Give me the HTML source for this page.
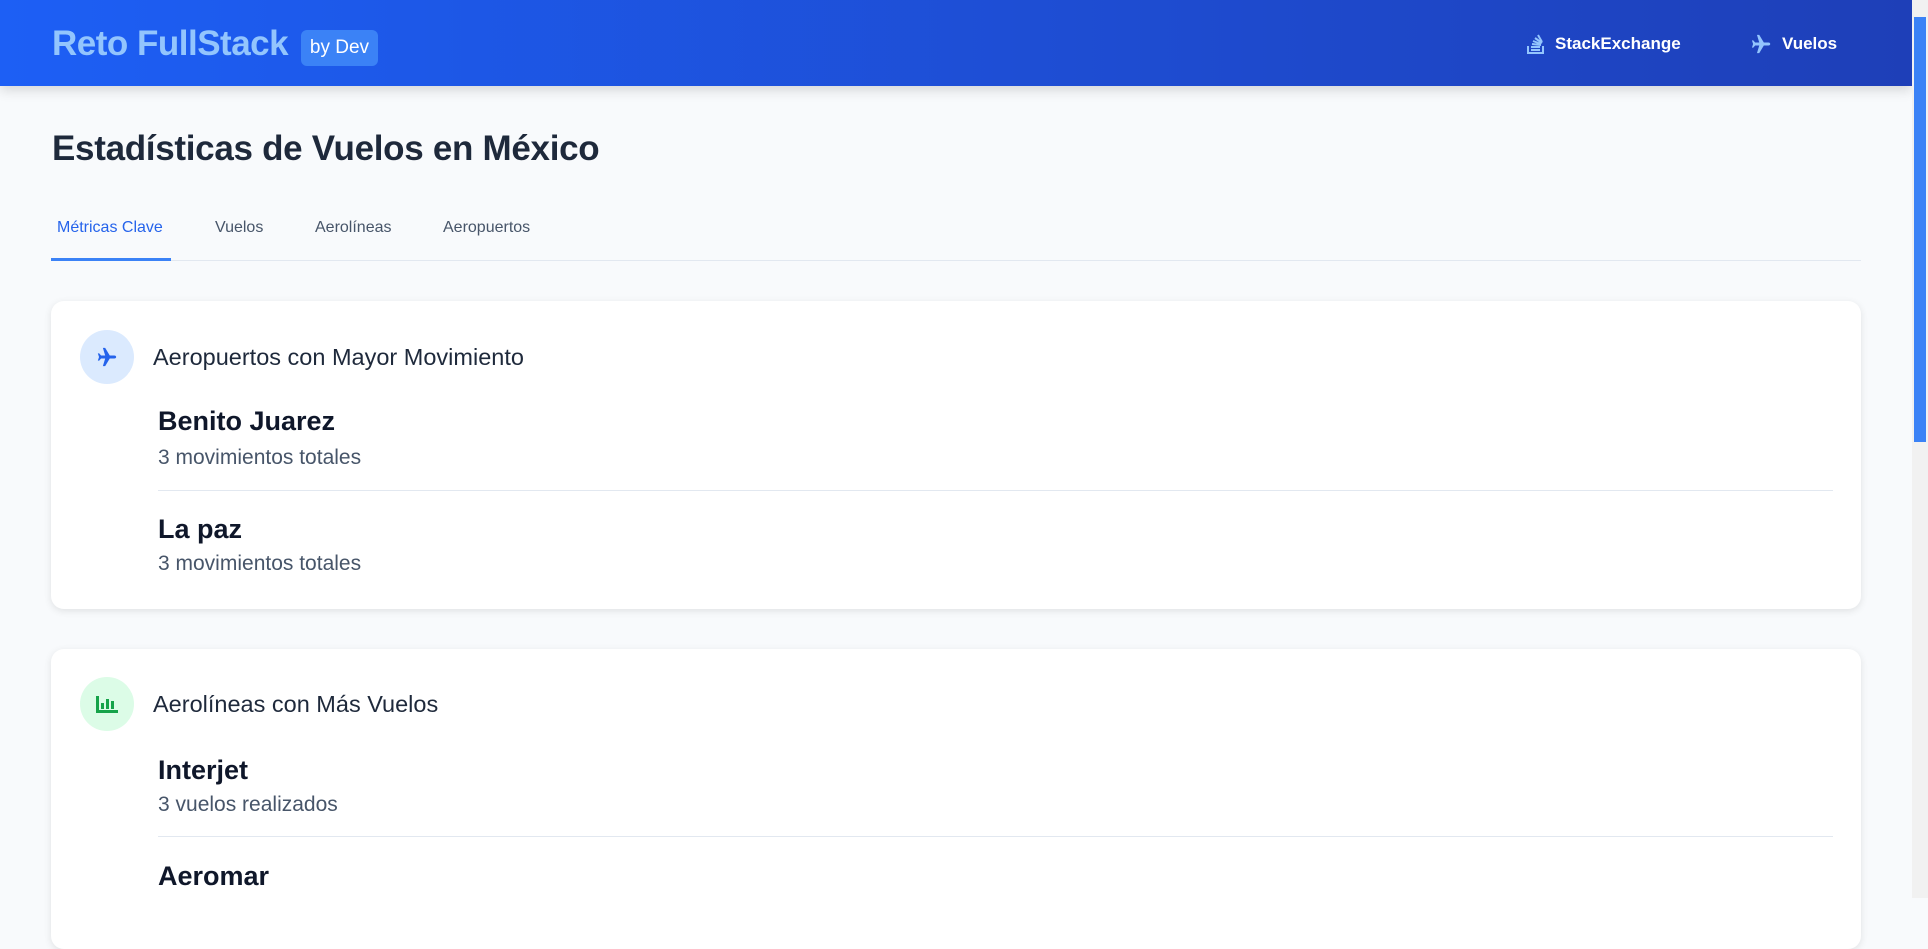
<!DOCTYPE html>
<html><head><meta charset="utf-8"><style>
*{box-sizing:border-box;margin:0;padding:0}
body{width:1928px;height:898px;overflow:hidden;background:#f8fafc;font-family:"Liberation Sans",sans-serif;position:relative}
.hdr{position:absolute;left:0;top:0;width:1912px;height:86px;background:linear-gradient(90deg,#1d5ff5,#1e3fb8);box-shadow:0 4px 12px rgba(0,0,0,.15)}
.logo{position:absolute;left:52px;top:24px;font-size:35px;font-weight:bold;color:#93c5fd;letter-spacing:-0.5px}
.badge{position:absolute;left:301px;top:30px;width:77px;height:36px;background:#3b82f6;border-radius:6px;color:#fff;font-size:19px;line-height:36px;text-align:center}
.nav{position:absolute;top:34px;font-size:17px;font-weight:bold;color:#fff}
h1{position:absolute;left:52px;top:129px;font-size:35px;color:#1e293b;letter-spacing:-0.3px}
.tab{position:absolute;top:219px;font-size:16px;color:#475569}
.card{position:absolute;left:51px;width:1810px;background:#fff;border-radius:13px;box-shadow:0 2px 8px rgba(0,0,0,.1)}
.ic{position:absolute;left:29px;width:54px;height:54px;border-radius:50%}
.ch{position:absolute;left:102px;font-size:23.5px;color:#1e293b}
.nm{position:absolute;left:107px;font-size:27px;font-weight:bold;color:#0f172a}
.sb{position:absolute;left:107px;font-size:21px;color:#475569}
.dv{position:absolute;left:107px;width:1675px;height:1px;background:#e2e8f0}
</style></head><body>
<div class="hdr">
<div class="logo">Reto FullStack</div>
<div class="badge">by Dev</div>
<svg style="position:absolute;left:1527px;top:34px" width="18" height="20" viewBox="0 0 18 20" fill="none" stroke="#93c5fd" stroke-width="2"><path d="M1 12v7h15v-7"/><path d="M4 16h9M4 13h9M5 10l9 1M6 7l8 3M8 4l7 5M11 1l4 7"/></svg>
<div class="nav" style="left:1555px">StackExchange</div>
<svg style="position:absolute;left:1750px;top:33px" width="24" height="22" viewBox="0 0 24 24" fill="#93c5fd"><path d="M21 12c0-1-1-1.6-2-1.6h-5L9 2H6.5l2.5 8.4H4.5L2.5 8H1l1.3 4L1 16h1.5l2-2.4H9L6.5 22H9l5-8.4h5c1 0 2-.6 2-1.6z"/></svg>
<div class="nav" style="left:1782px">Vuelos</div>
</div>
<div style="position:absolute;right:0;top:0;width:16px;height:898px;background:#f1f1f1"></div>
<div style="position:absolute;right:2px;top:17px;width:12px;height:425px;background:#3b82f6"></div>
<h1>Estadísticas de Vuelos en México</h1>
<div class="tab" style="left:57px;color:#2563eb">Métricas Clave</div>
<div class="tab" style="left:215px">Vuelos</div>
<div class="tab" style="left:315px">Aerolíneas</div>
<div class="tab" style="left:443px">Aeropuertos</div>
<div style="position:absolute;left:51px;top:260px;width:1810px;height:1px;background:#e2e8f0"></div>
<div style="position:absolute;left:51px;top:258px;width:120px;height:3px;background:#3b82f6"></div>

<div class="card" style="top:301px;height:308px">
<div class="ic" style="top:29px;background:#dbeafe"><svg style="position:absolute;left:15px;top:16px" width="24" height="22" viewBox="0 0 24 24" fill="#2563eb"><path d="M22 12c0-1-1-1.6-2-1.6h-5L10 2H7.5l2.5 8.4H5.5L3.5 8H2l1.3 4L2 16h1.5l2-2.4H10L7.5 22H10l5-8.4h5c1 0 2-.6 2-1.6z"/></svg></div>
<div class="ch" style="top:43px">Aeropuertos con Mayor Movimiento</div>
<div class="nm" style="top:105px">Benito Juarez</div>
<div class="sb" style="top:145px">3 movimientos totales</div>
<div class="dv" style="top:189px"></div>
<div class="nm" style="top:213px">La paz</div>
<div class="sb" style="top:251px">3 movimientos totales</div>
</div>

<div class="card" style="top:649px;height:300px">
<div class="ic" style="top:28px;background:#dcfce7"><svg style="position:absolute;left:16px;top:17px" width="22" height="20" viewBox="0 0 22 20" fill="#16a34a"><rect x="0" y="16" width="22" height="3"/><rect x="0" y="2" width="3" height="15"/><rect x="5" y="9" width="3" height="6"/><rect x="10" y="5" width="3" height="10"/><rect x="15" y="7" width="3" height="8"/></svg></div>
<div class="ch" style="top:42px">Aerolíneas con Más Vuelos</div>
<div class="nm" style="top:106px">Interjet</div>
<div class="sb" style="top:144px">3 vuelos realizados</div>
<div class="dv" style="top:187px"></div>
<div class="nm" style="top:212px">Aeromar</div>
</div>
</body></html>
